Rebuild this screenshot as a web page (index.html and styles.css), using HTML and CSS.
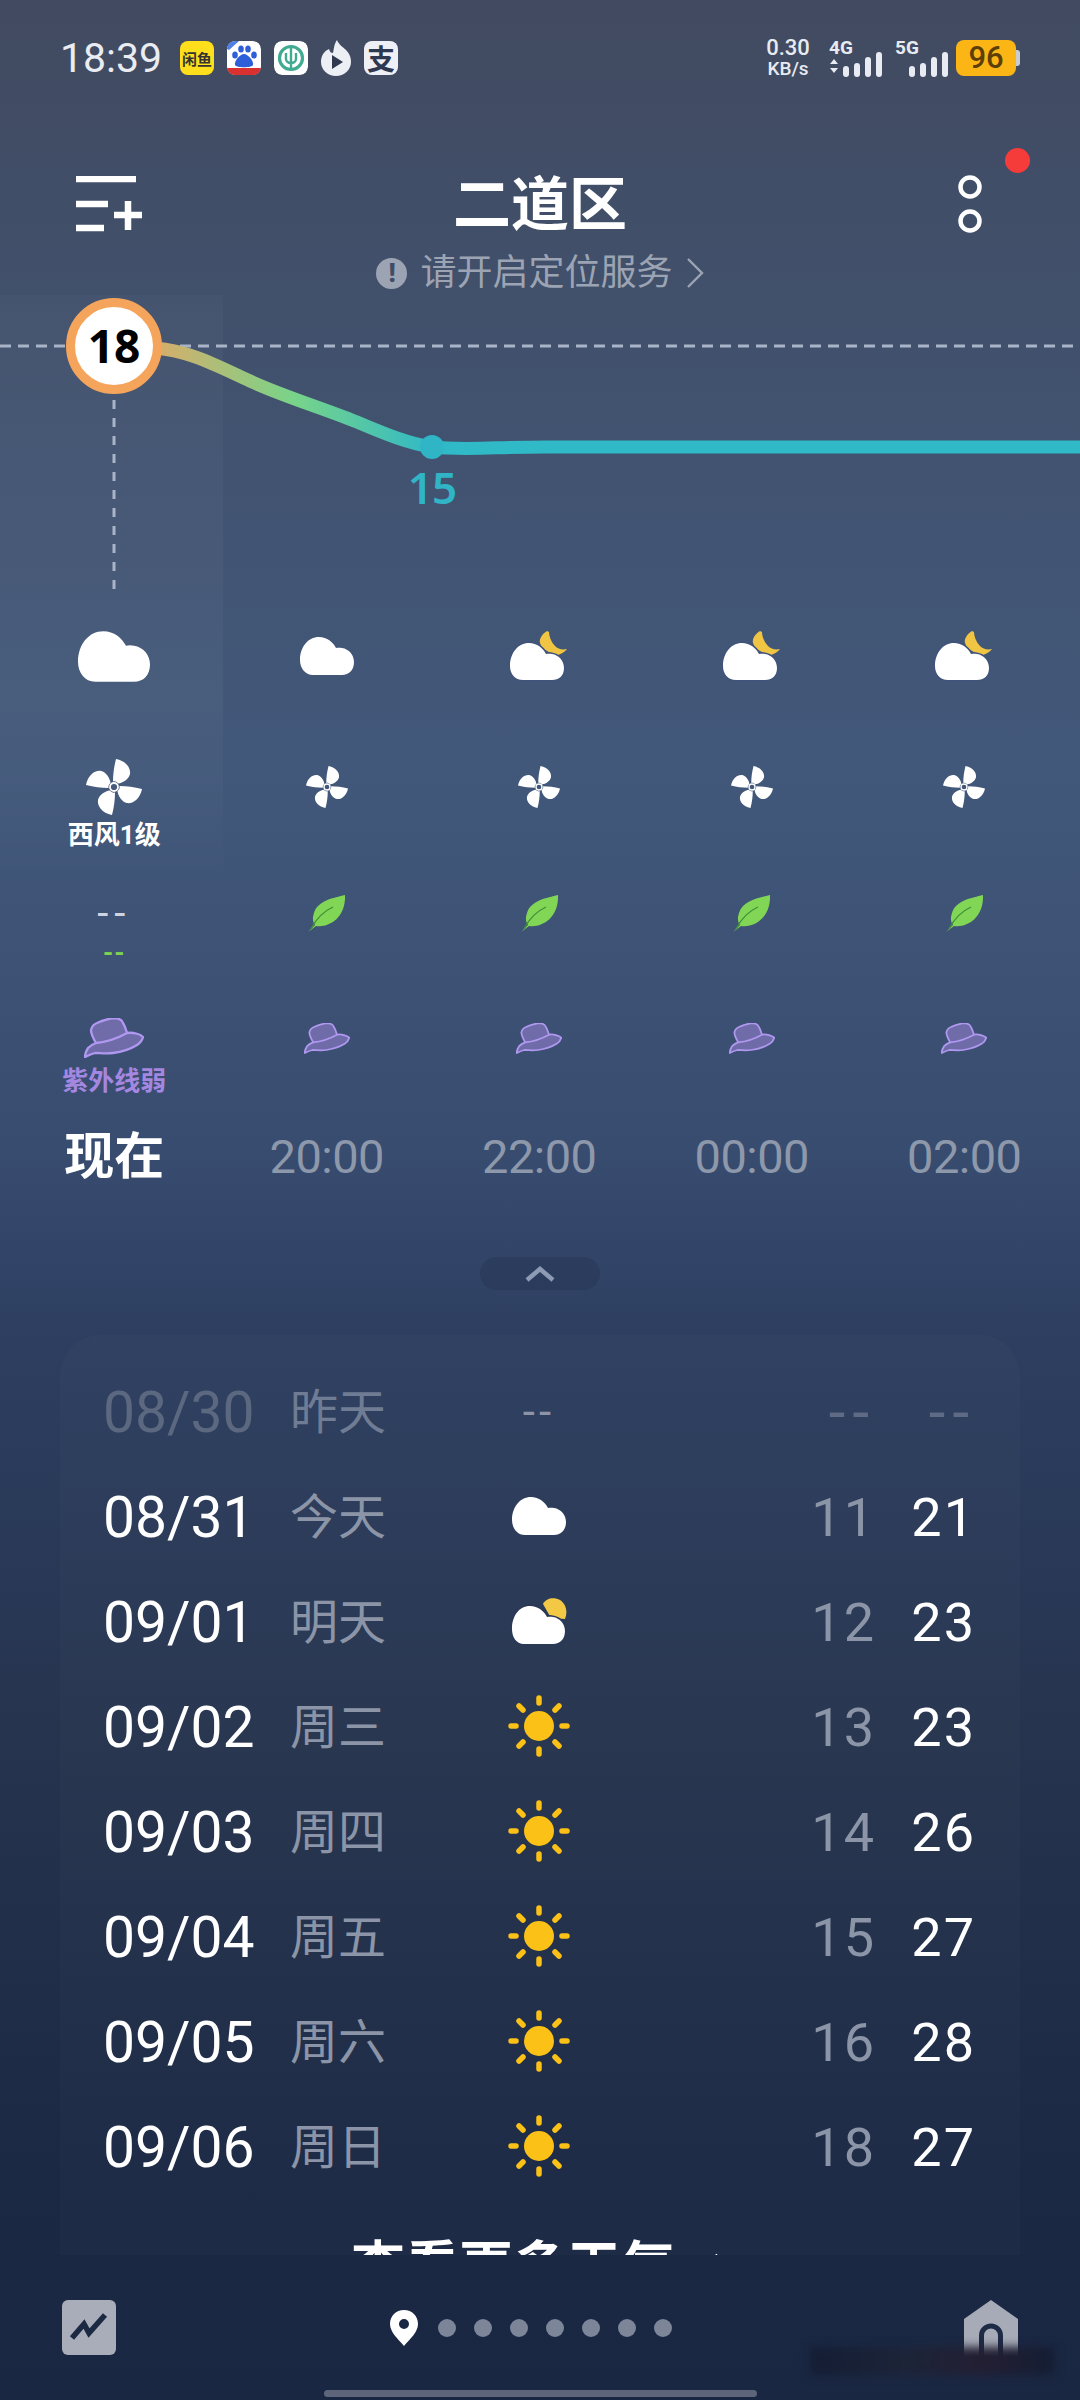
FILE: index.html
```html
<!DOCTYPE html>
<html lang="zh-CN">

<head>
    <meta charset="UTF-8">
    <meta name="viewport" content="width=device-width, initial-scale=1.0">
    <title>二道区天气</title>
    <link rel="stylesheet" href="styles.css">
</head>

<body>
    <svg class="defs" width="0" height="0">
        <symbol id="cloud" viewBox="0 0 54 38">
            <path d="M13 38C5 38 0 31 0 23 0 10 8 0 19 0 27 0 33 5 36 11 38 10.500 40 10.500 42 11 49 12 54 18 54 25 54 33 49 38 42 38Z" fill="#fff" />
        </symbol>
        <symbol id="cloud-moon" viewBox="0 0 60 50">
            <path d="M38 0C33 3 30 8 31 12 33 18 40 22 49 24 52 23 56 21 58 18 53 19 49 18 46 15 42 11 40 5 40 1Z" fill="#f0c544" />
            <path class="cut-night" d="M14 49C6 49 1 43 1 35 1 22 9 12 20 12 28 12 34 17 37 23 39 22.500 41 22.500 43 23 50 24 55 30 55 37 55 45 50 49 43 49Z" fill="#fff" />
        </symbol>
        <symbol id="cloud-sun" viewBox="0 0 56 46">
            <path d="M32 6C35 0 43-1 49 2 55 6 57 14 54 21L40 20Z" fill="#f3c844" />
            <path class="cut-day" d="M13 46C5 46 1 39 1 31 1 18 8 8 19 8 27 8 33 13 36 19 38 18.500 40 18.500 42 19 49 20 54 26 54 33 54 41 49 46 42 46Z" fill="#fff" />
        </symbol>
        <symbol id="sun" viewBox="0 0 62 62">
            <circle cx="31" cy="31" r="15" fill="#fbc117" />
            <g stroke="#fbc117" stroke-width="5.500" stroke-linecap="round">
                <path d="M31 3V8M31 54V59M3 31H8M54 31H59M11 11L15 15M47 47L51 51M51 11L47 15M15 47L11 51" />
            </g>
        </symbol>
        <symbol id="wind" viewBox="0 0 56 56">
            <g fill="#fff">
                <path id="blade" d="M30 0C40 2 45 9 44 15 43 20 37 24 32 24.500 31 23 29 22 27 22.500 27 15 28 8 30 0Z" />
                <use href="#blade" transform="rotate(90 28 28)" />
                <use href="#blade" transform="rotate(180 28 28)" />
                <use href="#blade" transform="rotate(270 28 28)" />
            </g>
            <circle cx="28" cy="28" r="4" fill="none" stroke="#fff" stroke-width="1.800" />
        </symbol>
        <symbol id="leaf" viewBox="0 0 37 37">
            <path d="M37 0C26 3 10 5 6 18 4 24 5 27 7 30L0 37 8 31C22 33 38 22 37 0Z" fill="#82d655" />
            <path d="M3 34C8 24 14 17 25 12" fill="none" stroke="#3f8f3c" stroke-width="1.300" />
        </symbol>
        <symbol id="hat" viewBox="0 0 60 40">
            <path d="M12 25C9 20 7 15 7 12 8 8 10 6 13 5 19 2 24 1 29 0 34 0 38 2 39 5 41 8 42 12 43 15 49 14 56 16 59 19 58 23 56 25 53 27 45 32 37 34 29 35 22 36 16 35 11 35 7 36 3 38 1 39 1 36 2 33 4 30 6 28 9 26 12 25Z" fill="#a487e0" fill-opacity=".5" stroke="#b098f0" stroke-width="2.300" stroke-linejoin="round" />
            <path d="M12 25C22 24 34 20 43 15" fill="none" stroke="#b098f0" stroke-width="2.300" />
        </symbol>
    </svg>

    <div class="page">
        <div class="status">
            <span class="clock">18:39</span>
            <div class="apps">
                <span class="app-tile app-xianyu">闲鱼</span>
                <svg class="app-tile" viewBox="0 0 34 34">
                    <rect width="34" height="34" rx="8" fill="#fff" />
                    <path d="M0 27H34V28C34 31 31 34 28 34H6C3 34 0 31 0 28Z" fill="#d8312f" />
                    <path d="M0 8C0 3 3 0 8 0L12 0 2 9Z" fill="#4f7fe6" />
                    <g fill="#2f5fd8">
                        <ellipse cx="8" cy="14" rx="2.800" ry="3.500" />
                        <ellipse cx="14" cy="8" rx="2.800" ry="3.500" />
                        <ellipse cx="21" cy="8" rx="2.800" ry="3.500" />
                        <ellipse cx="27" cy="14" rx="2.800" ry="3.500" />
                        <path d="M17 13C21 13 27 20 26 24 25 27 9 27 8 24 7 20 13 13 17 13Z" />
                    </g>
                </svg>
                <svg class="app-tile" viewBox="0 0 34 34">
                    <rect width="34" height="34" rx="8" fill="#fff" />
                    <circle cx="17" cy="17" r="11.500" fill="none" stroke="#41ab92" stroke-width="3.200" />
                    <path d="M17 5V29M12 12V18C12 20 14 22 17 22S22 20 22 18V12" fill="none" stroke="#41ab92" stroke-width="2.400" />
                </svg>
                <svg class="app-flame" viewBox="0 0 30 36">
                    <path d="M16 0C18 5 21 6 25 10 29 14 30 18 30 22 30 30 23 36 15 36 7 36 0 30 0 22 0 16 3 11 8 9 9 12 10 13 12 13 13 9 13 4 16 0Z" fill="#eceff4" />
                    <path d="M11 15L22 22 11 29Z" fill="#2f3a50" />
                </svg>
                <span class="app-tile app-alipay">支</span>
            </div>
            <div class="netinfo">
                <div class="speed"><span>0.30</span><span class="speed-unit">KB/s</span></div>
                <div class="signal signal-4g">
                    <span class="net-label">4G</span>
                    <svg width="55" height="25" viewBox="0 0 55 25">
                        <path d="M1 12L5 7 9 12ZM1 16L5 21 9 16Z" fill="#e8ebf1" />
                        <g fill="#e8ebf1">
                            <rect x="14" y="14" width="6" height="11" rx="3" />
                            <rect x="25" y="11" width="6" height="14" rx="3" />
                            <rect x="36" y="5" width="6" height="20" rx="3" />
                            <rect x="47" y="0" width="6" height="25" rx="3" />
                        </g>
                    </svg>
                </div>
                <div class="signal signal-5g">
                    <span class="net-label">5G</span>
                    <svg width="41" height="25" viewBox="0 0 41 25">
                        <g fill="#e8ebf1">
                            <rect x="0" y="14" width="6" height="11" rx="3" />
                            <rect x="11" y="11" width="6" height="14" rx="3" />
                            <rect x="22" y="5" width="6" height="20" rx="3" />
                            <rect x="33" y="0" width="6" height="25" rx="3" />
                        </g>
                    </svg>
                </div>
                <div class="battery">96</div>
            </div>
        </div>

        <header class="head">
            <div class="topbar">
                <svg class="menu-icon" width="68" height="56" viewBox="0 0 68 56">
                    <path d="M0 3H60M0 28H32M0 52H28M38 39H66M52 25V54" fill="none" stroke="#fff" stroke-width="6.500" />
                </svg>
                <h1 class="city">二道区</h1>
                <div class="more">
                    <svg width="24" height="58" viewBox="0 0 24 58">
                        <circle cx="12" cy="12" r="9.500" fill="none" stroke="#fff" stroke-width="4.500" />
                        <circle cx="12" cy="46" r="9.500" fill="none" stroke="#fff" stroke-width="4.500" />
                    </svg>
                    <span class="red-dot"></span>
                </div>
            </div>
            <div class="locate">
                <span class="locate-mark">!</span>
                <span>请开启定位服务</span>
                <svg width="18" height="30" viewBox="0 0 18 30">
                    <path d="M2 1L16 15 2 29" fill="none" stroke="#9ca4b4" stroke-width="2.400" />
                </svg>
            </div>
        </header>

        <section class="forecast">
            <svg class="chart" width="1080" height="300" viewBox="0 0 1080 300">
                <defs>
                    <linearGradient id="temp-line" gradientUnits="userSpaceOnUse" x1="155" y1="0" x2="432" y2="0">
                        <stop offset="0" stop-color="#d8ad6a" />
                        <stop offset=".5" stop-color="#78d489" />
                        <stop offset="1" stop-color="#30b9c6" />
                    </linearGradient>
                </defs>
                <path d="M0 51H1080" stroke="#aab4c9" stroke-width="3" stroke-dasharray="11 7" />
                <path d="M114 105V295" stroke="#aab4c9" stroke-width="3" stroke-dasharray="9 9" />
                <path d="M155 53C190 56 215 70 250 86 285 102 320 112 357 127 385 139 410 149 432 152" fill="none" stroke="url(#temp-line)" stroke-width="13" />
                <path d="M432 152C470 156 500 151 560 152H1080" fill="none" stroke="#30b9c6" stroke-width="13" />
                <circle cx="432" cy="152" r="12" fill="#2fb5c6" />
                <text class="low-mark" x="432" y="209" text-anchor="middle">15</text>
                <circle cx="114" cy="51" r="43.500" fill="#fff" stroke="#f5a55b" stroke-width="9" />
                <text class="now-temp" x="114" y="68" text-anchor="middle">18</text>
            </svg>

            <div class="hour-row row-weather">
                <svg class="ic-cloud-big"><use href="#cloud" /></svg>
                <svg class="ic-cloud"><use href="#cloud" /></svg>
                <svg class="ic-moon"><use href="#cloud-moon" /></svg>
                <svg class="ic-moon"><use href="#cloud-moon" /></svg>
                <svg class="ic-moon"><use href="#cloud-moon" /></svg>
            </div>

            <div class="hour-row row-wind">
                <div class="cell"><div class="icon-box"><svg class="ic-wind-big"><use href="#wind" /></svg></div><span class="cell-label">西风1级</span></div>
                <div class="cell"><div class="icon-box"><svg class="ic-wind"><use href="#wind" /></svg></div></div>
                <div class="cell"><div class="icon-box"><svg class="ic-wind"><use href="#wind" /></svg></div></div>
                <div class="cell"><div class="icon-box"><svg class="ic-wind"><use href="#wind" /></svg></div></div>
                <div class="cell"><div class="icon-box"><svg class="ic-wind"><use href="#wind" /></svg></div></div>
            </div>

            <div class="hour-row row-air">
                <div class="cell"><div class="icon-box air-none">--</div><span class="air-level">--</span></div>
                <div class="cell"><div class="icon-box"><svg class="ic-leaf"><use href="#leaf" /></svg></div></div>
                <div class="cell"><div class="icon-box"><svg class="ic-leaf"><use href="#leaf" /></svg></div></div>
                <div class="cell"><div class="icon-box"><svg class="ic-leaf"><use href="#leaf" /></svg></div></div>
                <div class="cell"><div class="icon-box"><svg class="ic-leaf"><use href="#leaf" /></svg></div></div>
            </div>

            <div class="hour-row row-uv">
                <div class="cell"><div class="icon-box"><svg class="ic-hat-big"><use href="#hat" /></svg></div><span class="cell-label uv-label">紫外线弱</span></div>
                <div class="cell"><div class="icon-box"><svg class="ic-hat"><use href="#hat" /></svg></div></div>
                <div class="cell"><div class="icon-box"><svg class="ic-hat"><use href="#hat" /></svg></div></div>
                <div class="cell"><div class="icon-box"><svg class="ic-hat"><use href="#hat" /></svg></div></div>
                <div class="cell"><div class="icon-box"><svg class="ic-hat"><use href="#hat" /></svg></div></div>
            </div>

            <div class="hour-row row-time">
                <span class="time-now">现在</span>
                <span>20:00</span>
                <span>22:00</span>
                <span>00:00</span>
                <span>02:00</span>
            </div>
        </section>

        <div class="collapse">
            <svg width="30" height="16" viewBox="0 0 30 16">
                <path d="M2 14L15 3 28 14" fill="none" stroke="#8e9bb5" stroke-width="4.500" />
            </svg>
        </div>

        <section class="days">
            <div class="day-row day-past">
                <span class="day-date">08/30</span><span class="day-name">昨天</span>
                <span class="day-icon day-none">--</span>
                <span class="day-low">--</span><span class="day-high">--</span>
            </div>
            <div class="day-row">
                <span class="day-date">08/31</span><span class="day-name">今天</span>
                <span class="day-icon"><svg class="ic-cloud"><use href="#cloud" /></svg></span>
                <span class="day-low">11</span><span class="day-high">21</span>
            </div>
            <div class="day-row">
                <span class="day-date">09/01</span><span class="day-name">明天</span>
                <span class="day-icon"><svg class="ic-cloud-sun"><use href="#cloud-sun" /></svg></span>
                <span class="day-low">12</span><span class="day-high">23</span>
            </div>
            <div class="day-row">
                <span class="day-date">09/02</span><span class="day-name">周三</span>
                <span class="day-icon"><svg class="ic-sun"><use href="#sun" /></svg></span>
                <span class="day-low">13</span><span class="day-high">23</span>
            </div>
            <div class="day-row">
                <span class="day-date">09/03</span><span class="day-name">周四</span>
                <span class="day-icon"><svg class="ic-sun"><use href="#sun" /></svg></span>
                <span class="day-low">14</span><span class="day-high">26</span>
            </div>
            <div class="day-row">
                <span class="day-date">09/04</span><span class="day-name">周五</span>
                <span class="day-icon"><svg class="ic-sun"><use href="#sun" /></svg></span>
                <span class="day-low">15</span><span class="day-high">27</span>
            </div>
            <div class="day-row">
                <span class="day-date">09/05</span><span class="day-name">周六</span>
                <span class="day-icon"><svg class="ic-sun"><use href="#sun" /></svg></span>
                <span class="day-low">16</span><span class="day-high">28</span>
            </div>
            <div class="day-row">
                <span class="day-date">09/06</span><span class="day-name">周日</span>
                <span class="day-icon"><svg class="ic-sun"><use href="#sun" /></svg></span>
                <span class="day-low">18</span><span class="day-high">27</span>
            </div>
            <div class="see-more">
                <span>查看更多天气</span>
                <svg width="16" height="30" viewBox="0 0 16 30">
                    <path d="M2 2L14 15 2 28" fill="none" stroke="#fff" stroke-width="4" />
                </svg>
            </div>
        </section>

        <nav class="bottom">
            <svg width="54" height="55" viewBox="0 0 54 55">
                <rect width="54" height="55" rx="6" fill="#a8adb9" />
                <path d="M10 38L22 24 27 33 43 15" fill="none" stroke="#1c2942" stroke-width="5.500" />
            </svg>
            <div class="pager">
                <svg width="28" height="36" viewBox="0 0 28 36">
                    <path fill-rule="evenodd" d="M14 0C22 0 28 6 28 14 28 22 20 29 14 36 8 29 0 22 0 14 0 6 6 0 14 0ZM14 9A5 5 0 1 0 14 19 5 5 0 0 0 14 9Z" fill="#fff" />
                </svg>
                <span class="dot"></span><span class="dot"></span><span class="dot"></span><span class="dot"></span><span class="dot"></span><span class="dot"></span><span class="dot"></span>
            </div>
            <svg class="home-icon" width="54" height="56" viewBox="0 0 54 56">
                <path d="M27 0L54 19V56H0V19Z" fill="#a6abb7" />
                <path d="M17.500 56V35.500A9.500 9.500 0 0 1 36.500 35.500V56" fill="none" stroke="#1e2b47" stroke-width="5" />
            </svg>
        </nav>
        <div class="home-bar"></div>
        <div class="smear"></div>
    </div>
</body>

</html>
```

FILE: styles.css
```css
* {
    margin: 0;
    padding: 0;
    box-sizing: border-box;
}

body {
    font-family: Roboto, "Noto Sans CJK SC", sans-serif;
    background: #1a2742;
}

.defs {
    position: absolute;
}

.page {
    position: relative;
    width: 1080px;
    height: 2400px;
    overflow: hidden;
    color: #fff;
    background: linear-gradient(180deg, #414a60 0%, #41506b 12%, #42587a 32%, #384c70 48%, #2d3e60 56%, #26344f 72%, #1b2945 90%, #1a2742 100%);
}

/* status bar */
.status {
    display: flex;
    align-items: center;
    height: 116px;
    padding-left: 60px;
}

.clock {
    width: 120px;
    font-size: 41px;
    color: #e9ecf1;
}

.apps {
    display: flex;
    align-items: center;
    gap: 13px;
}

.app-tile {
    display: flex;
    align-items: center;
    justify-content: center;
    width: 34px;
    height: 34px;
    border-radius: 8px;
}

.app-xianyu {
    background: #ffdf1c;
    color: #333;
    font-size: 15px;
    font-weight: 700;
}

.app-flame {
    width: 30px;
    height: 36px;
}

.app-alipay {
    background: #eef0f5;
    color: #2e3850;
    font-size: 28px;
    font-weight: 700;
}

.netinfo {
    display: flex;
    align-items: center;
    margin-left: auto;
    margin-right: 64px;
    color: #e8ebf1;
}

.speed {
    display: flex;
    flex-direction: column;
    align-items: center;
    width: 48px;
    font-size: 22px;
    font-weight: 500;
    line-height: 21px;
}

.speed-unit {
    font-size: 19px;
}

.signal {
    position: relative;
    height: 36px;
}

.signal svg {
    position: absolute;
    left: 0;
    bottom: -1px;
}

.signal-4g {
    width: 66px;
    margin-left: 17px;
}

.signal-5g {
    width: 51px;
}

.signal-5g svg {
    left: 14px;
}

.net-label {
    position: absolute;
    left: 0;
    top: -4px;
    font-size: 19px;
    font-weight: 700;
}

.signal-5g .net-label {
    left: 0;
}

.battery {
    position: relative;
    width: 60px;
    height: 36px;
    margin-left: 10px;
    border-radius: 8px;
    background: #fbb515;
    color: #5c3f05;
    font-size: 31px;
    font-weight: 500;
    line-height: 36px;
    text-align: center;
}

.battery::after {
    content: "";
    position: absolute;
    right: -4px;
    top: 10px;
    width: 4px;
    height: 16px;
    border-radius: 0 3px 3px 0;
    background: #c9ccd0;
}

/* header */
.head {
    height: 179px;
    padding-top: 58px;
}

.topbar {
    display: grid;
    grid-template-columns: 1fr auto 1fr;
    align-items: center;
    height: 58px;
    padding: 0 76px;
}

.city {
    padding-top: 2px;
    font-size: 58px;
    font-weight: 700;
    line-height: 58px;
}

.more {
    position: relative;
    justify-self: end;
    width: 24px;
    height: 58px;
    margin-right: 22px;
}

.red-dot {
    position: absolute;
    left: 47px;
    top: -27px;
    width: 25px;
    height: 25px;
    border-radius: 50%;
    background: #f63b3b;
}

.locate {
    display: flex;
    align-items: center;
    justify-content: center;
    gap: 13px;
    margin-top: 21px;
    font-size: 36px;
    line-height: 40px;
    color: #9ca4b4;
}

.locate-mark {
    width: 31px;
    height: 31px;
    border-radius: 50%;
    background: #9ca4b4;
    color: #414d66;
    font-size: 26px;
    font-weight: 900;
    line-height: 31px;
    text-align: center;
}

/* hourly part */
.forecast {
    position: relative;
}

.forecast::before {
    content: "";
    position: absolute;
    left: 0;
    top: 0;
    width: 223px;
    height: 590px;
    background: linear-gradient(180deg, rgba(255, 255, 255, .025), rgba(255, 255, 255, .035) 70%, rgba(255, 255, 255, 0));
}

.chart {
    position: relative;
    display: block;
}

.now-temp {
    font-family: "Noto Sans", sans-serif;
    font-size: 46px;
    font-weight: 700;
    fill: #000;
}

.low-mark {
    font-family: "Noto Sans", sans-serif;
    font-size: 44px;
    font-weight: 600;
    letter-spacing: -1px;
    fill: #30b4c6;
}

.hour-row {
    position: relative;
    display: grid;
    grid-template-columns: repeat(5, 212.500px);
    padding-left: 8px;
    justify-items: center;
}

.row-weather {
    height: 122px;
    align-items: center;
}

.row-wind {
    height: 151px;
    padding-top: 35px;
}

.row-air {
    height: 135px;
    padding-top: 10px;
}

.row-uv {
    height: 122px;
}

.row-time {
    height: 60px;
    padding-top: 2px;
    align-items: center;
    font-size: 47px;
    letter-spacing: -.5px;
    line-height: 60px;
    color: #8e98ab;
}

.time-now {
    font-size: 50px;
    font-weight: 700;
    letter-spacing: 0;
    color: #fff;
}

.cell {
    display: flex;
    flex-direction: column;
    align-items: center;
}

.icon-box {
    display: flex;
    align-items: center;
    justify-content: center;
    height: 70px;
}

.cell-label {
    font-size: 26px;
    font-weight: 700;
    line-height: 26px;
}

.uv-label {
    margin-top: -5px;
    color: #a487e0;
}

.air-none {
    font-size: 40px;
    letter-spacing: 6px;
    color: #cfd4e0;
}

.air-level {
    margin-top: -8px;
    font-size: 26px;
    font-weight: 700;
    line-height: 26px;
    letter-spacing: 1px;
    color: #7ed24f;
}

.ic-cloud-big { width: 72px; height: 51px; }
.ic-cloud { width: 54px; height: 38px; }
.ic-moon { width: 60px; height: 50px; }
.ic-cloud-sun { width: 56px; height: 46px; }
.ic-sun { width: 62px; height: 62px; }
.ic-wind-big { width: 56px; height: 56px; }
.ic-wind { width: 42px; height: 42px; }
.ic-leaf { width: 37px; height: 37px; }
.ic-hat-big { width: 60px; height: 40px; }
.ic-hat { width: 46px; height: 31px; }

.cut-night {
    stroke: #40537a;
    stroke-width: 3;
    paint-order: stroke;
}

.cut-day {
    stroke: #2a3857;
    stroke-width: 3;
    paint-order: stroke;
}

.collapse {
    display: flex;
    align-items: center;
    justify-content: center;
    width: 120px;
    height: 33px;
    margin: 72px auto 0;
    border-radius: 17px;
    background: rgba(20, 34, 60, .2);
}

/* daily part */
.days {
    height: 920px;
    margin: 45px 60px 0;
    padding-top: 23px;
    overflow: hidden;
    border-radius: 40px 40px 0 0;
    background: rgba(255, 255, 255, .014);
}

.day-row {
    display: grid;
    grid-template-columns: 187px 209px 80px 1fr 100px;
    align-items: center;
    height: 105px;
    padding: 0 44px 0 43px;
    font-size: 54px;
}

.day-date {
    padding-top: 3px;
    font-size: 57px;
}

.day-name {
    padding-bottom: 5px;
    font-size: 48px;
    color: #8b95a7;
}

.day-icon {
    display: flex;
    align-items: center;
    justify-content: center;
    height: 62px;
}

.day-low,
.day-high {
    padding-top: 4px;
    text-align: right;
    letter-spacing: 2px;
}

.day-low {
    color: #8b95a7;
}

.day-past .day-date {
    color: #5c6880;
}

.day-past .day-name {
    color: #707c93;
}

.day-past .day-low,
.day-past .day-high {
    font-size: 60px;
    letter-spacing: 7px;
    color: #5f6b84;
}

.day-none {
    padding-top: 3px;
    font-size: 44px;
    letter-spacing: 4px;
    color: #8b95a7;
}

.see-more {
    display: flex;
    align-items: center;
    justify-content: center;
    gap: 38px;
    margin-top: 42px;
    font-size: 54px;
    font-weight: 700;
    line-height: 56px;
}

/* bottom */
.bottom {
    display: flex;
    align-items: center;
    height: 55px;
    margin-top: 45px;
    padding: 0 62px;
}

.pager {
    display: flex;
    align-items: center;
    gap: 18px;
    margin-left: 274px;
}

.pager svg {
    margin-right: 2px;
}

.dot {
    width: 18px;
    height: 18px;
    border-radius: 50%;
    background: #7d8698;
}

.home-icon {
    margin-left: auto;
}

.home-bar {
    width: 433px;
    height: 7px;
    margin: 35px auto 0;
    border-radius: 4px;
    background: #5c6579;
}

.smear {
    position: absolute;
    left: 810px;
    top: 2347px;
    width: 245px;
    height: 28px;
    background: linear-gradient(90deg, #141d33, #1c2438 40%, #241f33 70%, #141d33);
    filter: blur(5px);
}
```
